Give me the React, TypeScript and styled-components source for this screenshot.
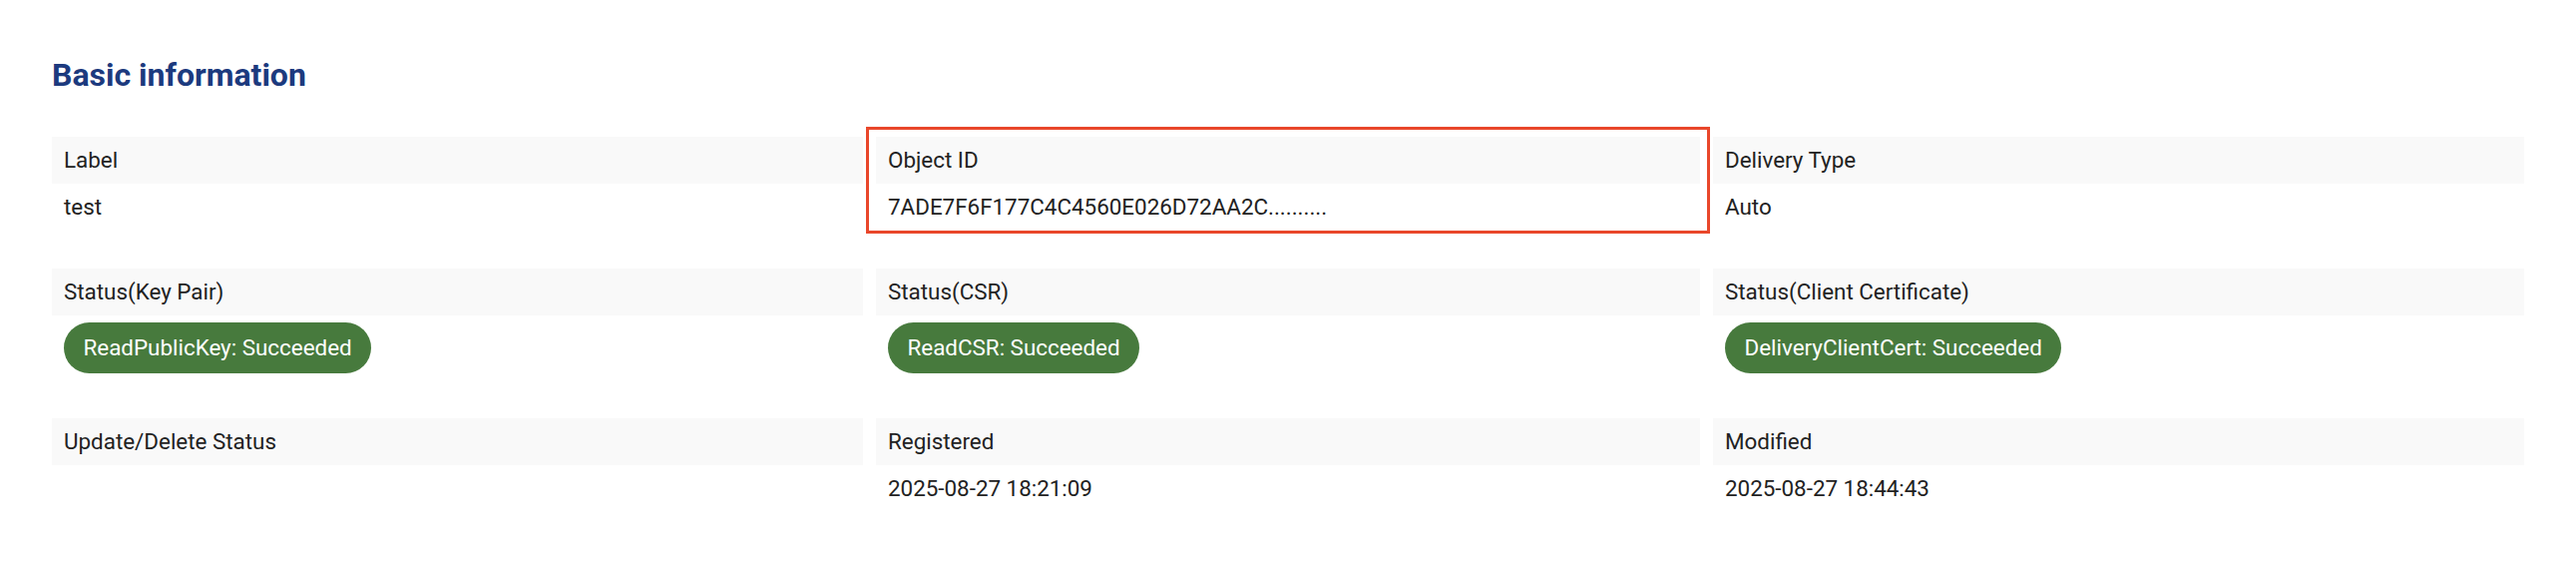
import styled, { createGlobalStyle } from 'styled-components';

const GlobalStyle = createGlobalStyle`
  html, body {
    margin: 0;
    padding: 0;
    background: #fff;
  }
  body {
    font-family: Roboto, 'Liberation Sans', Arial, sans-serif;
    font-size: 22.4px;
    color: #222;
  }
`;

const StyledSection = styled.section`
  padding: 56px 52px 40px;

  & .section-title {
    margin: 0 0 42.6px;
    font-size: 32px;
    line-height: 1.2;
    font-weight: 700;
    color: #1c3a7e;
  }
`;

const InfoGrid = styled.div`
  display: grid;
  grid-template-columns: 813fr 826fr 813fr;
  column-gap: 13px;
  row-gap: 45px;
`;

const InfoItem = styled.div<{ $highlight?: boolean }>`
  display: flex;
  flex-direction: column;
  min-width: 0;
  outline: ${(p) => (p.$highlight ? '3px solid #e9472b' : 'none')};
  outline-offset: 7px;
`;

const ItemLabel = styled.div`
  background: #f9f9f9;
  padding: 6.7px 12px;
  line-height: 1.5;
  color: #222;
`;

const ItemValue = styled.div`
  padding: 6.7px 12px 0;
  line-height: 1.5;
  min-height: 33.6px;
  color: #222;
`;

const StatusBadge = styled.span`
  display: inline-block;
  padding: 8.7px 19.5px;
  border-radius: 999px;
  background: #477a3d;
  color: #fff;
  line-height: 1.5;
  white-space: nowrap;
`;

type Item = {
  label: string;
  value?: string;
  status?: string;
  highlight?: boolean;
};

const items: Item[] = [
  { label: 'Label', value: 'test' },
  { label: 'Object ID', value: '7ADE7F6F177C4C4560E026D72AA2C..........', highlight: true },
  { label: 'Delivery Type', value: 'Auto' },
  { label: 'Status(Key Pair)', status: 'ReadPublicKey: Succeeded' },
  { label: 'Status(CSR)', status: 'ReadCSR: Succeeded' },
  { label: 'Status(Client Certificate)', status: 'DeliveryClientCert: Succeeded' },
  { label: 'Update/Delete Status', value: '' },
  { label: 'Registered', value: '2025-08-27 18:21:09' },
  { label: 'Modified', value: '2025-08-27 18:44:43' },
];

function App() {
  return (
    <>
      <GlobalStyle />
      <StyledSection>
        <h2 className="section-title">Basic information</h2>
        <InfoGrid>
          {items.map((item) => (
            <InfoItem key={item.label} $highlight={item.highlight}>
              <ItemLabel>{item.label}</ItemLabel>
              <ItemValue>
                {item.status ? <StatusBadge>{item.status}</StatusBadge> : item.value}
              </ItemValue>
            </InfoItem>
          ))}
        </InfoGrid>
      </StyledSection>
    </>
  );
}

export default App;
